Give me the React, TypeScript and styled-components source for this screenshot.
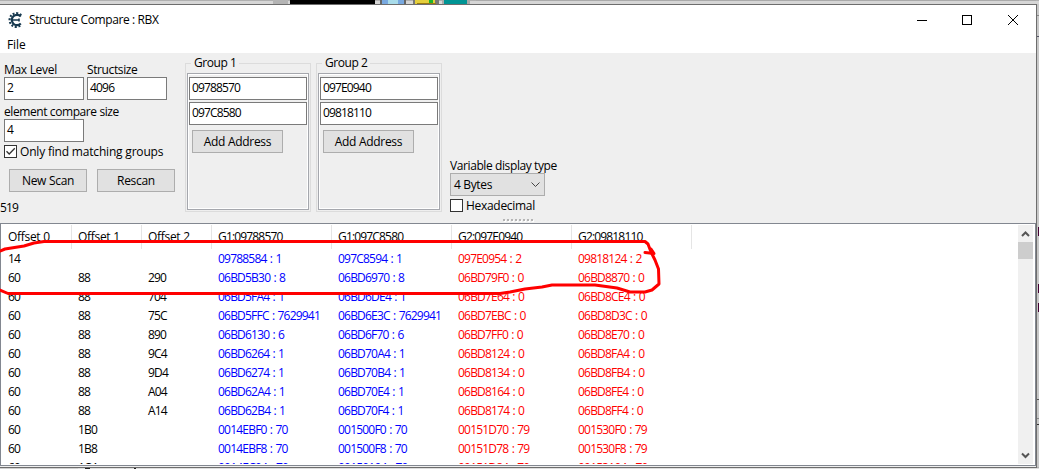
import React from "react";
import styled, { createGlobalStyle } from "styled-components";

const GlobalStyle = createGlobalStyle`
  * { box-sizing: border-box; }
  body { margin: 0; overflow: hidden; }
`;

const Desktop = styled.div`
  position: relative;
  display: grid;
  grid-template-columns: 1036px 1px 2px;
  grid-template-rows: 4px 463px 2px;
  width: 1039px;
  height: 469px;
  overflow: hidden;
  background: #c8c8c8;
  color: #000;
  font: 12px/16px "Open Sans", "Noto Sans", sans-serif;
  white-space: nowrap;
`;

const Strip = styled.div`
  grid-column: 1 / -1;
  background: linear-gradient(#b0b0b0 0 1px, #d6d6d6 1px);
  svg { display: block; }
`;

const Frame = styled.div`
  background: #6d6d6d;
`;

const Window = styled.div`
  display: flex;
  flex-direction: column;
  border-top: 1px solid #6d6d6d;
  background: #efefef;
  overflow: hidden;
`;

const Label = styled.span<{ $ls?: number }>`
  letter-spacing: ${(p) => p.$ls ?? 0}px;
`;

const TitleBar = styled.div`
  display: flex;
  align-items: center;
  height: 29px;
  padding: 0 17px 0 8px;
  background: #fff;
  svg { display: block; }
`;

const Title = styled.div`
  flex: 1;
  padding-left: 5px;
`;

const MenuBar = styled.div`
  height: 19px;
  padding: 3px 7px 0;
  background: #fff;
`;

const Controls = styled.div`
  display: flex;
  height: 162px;
`;

const Options = styled.div`
  width: 185px;
  padding: 9px 0 0 4px;
`;

const FieldRow = styled.div`
  display: flex;
  gap: 3px;
`;

const Field = styled.div<{ $gap?: number }>`
  width: 80px;
  margin-bottom: ${(p) => p.$gap ?? 0}px;
  line-height: 15px;
`;

const Input = styled.div`
  height: 23px;
  padding: 2px 2px;
  border: 1px solid #7a7a7a;
  background: #fff;
  line-height: 16px;
`;

const CheckRow = styled.div`
  display: flex;
  align-items: center;
  gap: 3px;
  height: 13px;
`;

const Box = styled.div`
  width: 13px;
  height: 13px;
  border: 1px solid #333;
  background: #fff;
  svg { display: block; }
`;

const ButtonRow = styled.div`
  display: flex;
  gap: 10px;
  padding: 11px 0 0 5px;
`;

const Button = styled.div<{ $w: number }>`
  width: ${(p) => p.$w}px;
  height: 23px;
  border: 1px solid #adadad;
  background: #e1e1e1;
  text-align: center;
  line-height: 21px;
`;

const Count = styled.div`
  margin: 8px 0 0 -4px;
`;

const Group = styled.fieldset`
  width: 126px;
  height: 157px;
  min-width: 0;
  margin: 2px 5px 0 0;
  padding: 2px 1px 1px;
  border: 1px solid #dcdcdc;
  display: block;
`;

const Legend = styled.legend`
  margin-left: 4px;
  padding: 0 3px;
  height: 16px;
`;

const GroupBody = styled.div`
  height: 137px;
  border: 1px solid #a5a7ad;
  box-shadow: inset 0 0 0 1px #fff;
  display: flex;
  flex-direction: column;
  gap: 2px;
  padding: 3px 1px 0;
`;

const AddSlot = styled.div`
  padding: 3px 0 0 3px;
`;

const Display = styled.div`
  padding: 105px 0 0 3px;
`;

const Select = styled.div`
  display: flex;
  align-items: center;
  justify-content: space-between;
  width: 95px;
  height: 23px;
  margin-bottom: 3px;
  padding: 0 3px;
  border: 1px solid #adadad;
  background: #e1e1e1;
`;

const Splitter = styled.div`
  height: 8px;
  padding: 4px 0 0 503px;
  svg { display: block; }
`;

const List = styled.div`
  display: flex;
  flex: none;
  height: 243px;
  padding: 1px 1px 1px 0;
  border: 1px solid #828790;
  background: #fff;
`;

const Table = styled.div`
  flex: 1;
  overflow: hidden;
`;

const Row = styled.div<{ $head?: boolean }>`
  display: grid;
  grid-template-columns: 71px 70px 70px 120px 120px 120px 120px;
  height: ${(p) => (p.$head ? 24 : 19)}px;
  line-height: ${(p) => (p.$head ? 24 : 19)}px;
`;

const Cell = styled.div<{ $color?: string; $head?: boolean; $ls: number }>`
  padding-left: 6px;
  &:first-child { padding-left: 7px; }
  color: ${(p) => p.$color ?? "#000"};
  letter-spacing: ${(p) => p.$ls}px;
  word-spacing: ${(p) => (p.$head ? 0 : 0.9)}px;
  border-right: ${(p) => (p.$head ? "1px solid #e5e5e5" : "none")};
`;

const ScrollBar = styled.div`
  display: flex;
  flex-direction: column;
  width: 16px;
  border-right: 1px solid #fff;
  background: #f0f0f0;
  svg { display: block; flex: none; }
`;

const Thumb = styled.div`
  height: 17px;
  background: #cdcdcd;
`;

const Track = styled.div`
  flex: 1;
`;

const Markup = styled.svg`
  position: absolute;
  left: 0;
  top: 0;
  pointer-events: none;
`;

const heads = ["Offset 0", "Offset 1", "Offset 2", "G1:09788570", "G1:097C8580", "G2:097E0940", "G2:09818110"];

const rows = [
  ["14", "", "", "09788584 : 1", "097C8594 : 1", "097E0954 : 2", "09818124 : 2"],
  ["60", "88", "290", "06BD5B30 : 8", "06BD6970 : 8", "06BD79F0 : 0", "06BD8870 : 0"],
  ["60", "88", "704", "06BD5FA4 : 1", "06BD6DE4 : 1", "06BD7E64 : 0", "06BD8CE4 : 0"],
  ["60", "88", "75C", "06BD5FFC : 7629941", "06BD6E3C : 7629941", "06BD7EBC : 0", "06BD8D3C : 0"],
  ["60", "88", "890", "06BD6130 : 6", "06BD6F70 : 6", "06BD7FF0 : 0", "06BD8E70 : 0"],
  ["60", "88", "9C4", "06BD6264 : 1", "06BD70A4 : 1", "06BD8124 : 0", "06BD8FA4 : 0"],
  ["60", "88", "9D4", "06BD6274 : 1", "06BD70B4 : 1", "06BD8134 : 0", "06BD8FB4 : 0"],
  ["60", "88", "A04", "06BD62A4 : 1", "06BD70E4 : 1", "06BD8164 : 0", "06BD8FE4 : 0"],
  ["60", "88", "A14", "06BD62B4 : 1", "06BD70F4 : 1", "06BD8174 : 0", "06BD8FF4 : 0"],
  ["60", "1B0", "", "0014EBF0 : 70", "001500F0 : 70", "00151D70 : 79", "001530F0 : 79"],
  ["60", "1B8", "", "0014EBF8 : 70", "001500F8 : 70", "00151D78 : 79", "001530F8 : 79"],
  ["60", "1C4", "", "0014EC04 : 70", "00150104 : 70", "00151D84 : 79", "00153104 : 79"],
];

const columnColor = (i: number) => (i < 3 ? "#000" : i < 5 ? "#00f" : "#f00");

const AddressGroup = ({ name, addresses }: { name: string; addresses: string[] }) => (
  <Group>
    <Legend><Label $ls={-0.45}>{name}</Label></Legend>
    <GroupBody>
      {addresses.map((a) => (
        <Input key={a}><Label $ls={-0.85}>{a}</Label></Input>
      ))}
      <AddSlot><Button $w={91}><Label $ls={-0.3}>Add Address</Label></Button></AddSlot>
    </GroupBody>
  </Group>
);

export default function App() {
  return (
    <>
      <GlobalStyle />
      <Desktop>
        <Strip>
          <svg width="1039" height="4" shapeRendering="crispEdges">
            <rect x="273" width="15" height="4" fill="#b4b4b4" />
            <rect x="290" width="85" height="4" fill="#000" />
            <rect x="380" width="26" height="4" fill="#666" />
            <rect x="382" width="22" height="4" fill="#78a9e0" />
            <rect x="388" width="10" height="4" fill="#a9dcea" />
            <rect x="413" width="26" height="4" fill="#777" />
            <rect x="415" width="20" height="4" fill="#e5cf3c" />
            <rect x="429" width="4" height="3" fill="#1cb52b" />
            <rect x="417" y="3" width="19" height="1" fill="#9a7b10" />
            <rect x="442" width="28" height="4" fill="#aaa" />
            <rect x="444" width="23" height="4" fill="#009494" />
            <rect x="476" width="560" height="1" fill="#aaa" />
          </svg>
        </Strip>
        <Window>
          <TitleBar>
            <svg width="16" height="16" viewBox="0 0 16 16" fill="none" stroke="#17394f">
              <path d="M12.8 4.4A5.2 5.2 0 1 0 12.8 11.6" strokeWidth="2.2" />
              <path d="M13.2 3.2A6.8 6.8 0 1 0 13.2 12.8" strokeWidth="2.2" strokeDasharray="1.9 1.6" />
              <path d="M3 8H11.5M11 6.6V9.4" strokeWidth="1.6" />
            </svg>
            <Title><Label $ls={-0.38}>Structure Compare : RBX</Label></Title>
            <svg width="102" height="10" fill="none" stroke="#000" shapeRendering="crispEdges">
              <path d="M0 5.5H10" />
              <rect x="45.5" y=".5" width="9" height="9" />
              <path d="M91 0L101 10M101 0L91 10" shapeRendering="auto" />
            </svg>
          </TitleBar>
          <MenuBar><Label $ls={-0.1}>File</Label></MenuBar>
          <Controls>
            <Options>
              <FieldRow>
                <Field $gap={4}><Label $ls={-0.3}>Max Level</Label><Input><Label $ls={-0.8}>2</Label></Input></Field>
                <Field $gap={4}><Label $ls={-0.38}>Structsize</Label><Input><Label $ls={-0.8}>4096</Label></Input></Field>
              </FieldRow>
              <Field $gap={3}><Label $ls={-0.41}>element compare size</Label><Input><Label $ls={-0.8}>4</Label></Input></Field>
              <CheckRow>
                <Box>
                  <svg width="11" height="11" fill="none" stroke="#333" strokeWidth="1.3"><path d="M1.5 5.2L4.2 8L9.8 2.2" /></svg>
                </Box>
                <Label $ls={-0.19}>Only find matching groups</Label>
              </CheckRow>
              <ButtonRow>
                <Button $w={78}><Label $ls={-0.3}>New Scan</Label></Button>
                <Button $w={78}><Label $ls={-0.3}>Rescan</Label></Button>
              </ButtonRow>
              <Count><Label $ls={-0.8}>519</Label></Count>
            </Options>
            <AddressGroup name="Group 1" addresses={["09788570", "097C8580"]} />
            <AddressGroup name="Group 2" addresses={["097E0940", "09818110"]} />
            <Display>
              <Field><Label $ls={-0.4}>Variable display type</Label></Field>
              <Select>
                <Label $ls={-0.35}>4 Bytes</Label>
                <svg width="11" height="7" fill="none" stroke="#444"><path d="M1.5 1.5L5.5 5.5L9.5 1.5" /></svg>
              </Select>
              <CheckRow><Box /><Label $ls={-0.3}>Hexadecimal</Label></CheckRow>
            </Display>
          </Controls>
          <Splitter>
            <svg width="32" height="3">
              {Array.from({ length: 8 }, (_, i) => (
                <g key={i}>
                  <rect x={i * 4 + 1} y="1" width="2" height="2" fill="#fff" />
                  <rect x={i * 4} y="0" width="2" height="2" fill="#b4b4b4" />
                </g>
              ))}
            </svg>
          </Splitter>
          <List>
            <Table>
              <Row $head>
                {heads.map((h, i) => <Cell key={h} $head $ls={i < 3 ? -0.3 : -0.83}>{h}</Cell>)}
              </Row>
              {rows.map((r, n) => (
                <Row key={n}>
                  {r.map((c, i) => <Cell key={i} $ls={i < 3 ? -0.8 : -0.79} $color={columnColor(i)}>{c}</Cell>)}
                </Row>
              ))}
            </Table>
            <ScrollBar>
              <svg width="15" height="17" fill="none" stroke="#555" strokeWidth="2"><path d="M4 11L7.5 7.5L11 11" /></svg>
              <Thumb />
              <Track />
              <svg width="15" height="17" fill="none" stroke="#555" strokeWidth="2"><path d="M4 6.5L7.5 10L11 6.5" /></svg>
            </ScrollBar>
          </List>
        </Window>
        <Frame />
        <svg width="2" height="463" shapeRendering="crispEdges">
          <rect y="11" width="2" height="1" fill="#888" />
          <rect y="32" width="2" height="1" fill="#556" />
          <rect x="1" y="223" width="1" height="9" fill="#403" />
          <rect x="1" y="280" width="1" height="9" fill="#403" />
          <rect x="1" y="299" width="1" height="9" fill="#403" />
          <rect y="395" width="2" height="1" fill="#555" />
          <rect y="414" width="2" height="1" fill="#888" />
          <rect y="420" width="2" height="1" fill="#333" />
        </svg>
        <Strip>
          <svg width="1039" height="2" shapeRendering="crispEdges">
            <rect width="1037" height="1" fill="#6d6d6d" />
            <rect y="1" width="78" height="1" fill="#d0d0d0" />
            <rect x="78" y="1" width="961" height="1" fill="#dedede" />
            <rect x="85" y="1" width="5" height="1" fill="#222" />
            <rect x="134" y="1" width="2" height="1" fill="#222" />
          </svg>
        </Strip>
        <Markup width="1039" height="469" fill="none" stroke="#f00" strokeWidth="3" strokeLinecap="round" strokeLinejoin="round">
          <path d="M0 251L5 249L24 246L34 243L44 241.5H645L648 244L651 252L655 260L658.500 269L659 284L652 290L645 292H630L617 288L595 285H552L542 287L525 289L510 292L500 293.500H8L0 290" />
          <path d="M645 252.500L654 253.500L651 249" />
        </Markup>
      </Desktop>
    </>
  );
}
